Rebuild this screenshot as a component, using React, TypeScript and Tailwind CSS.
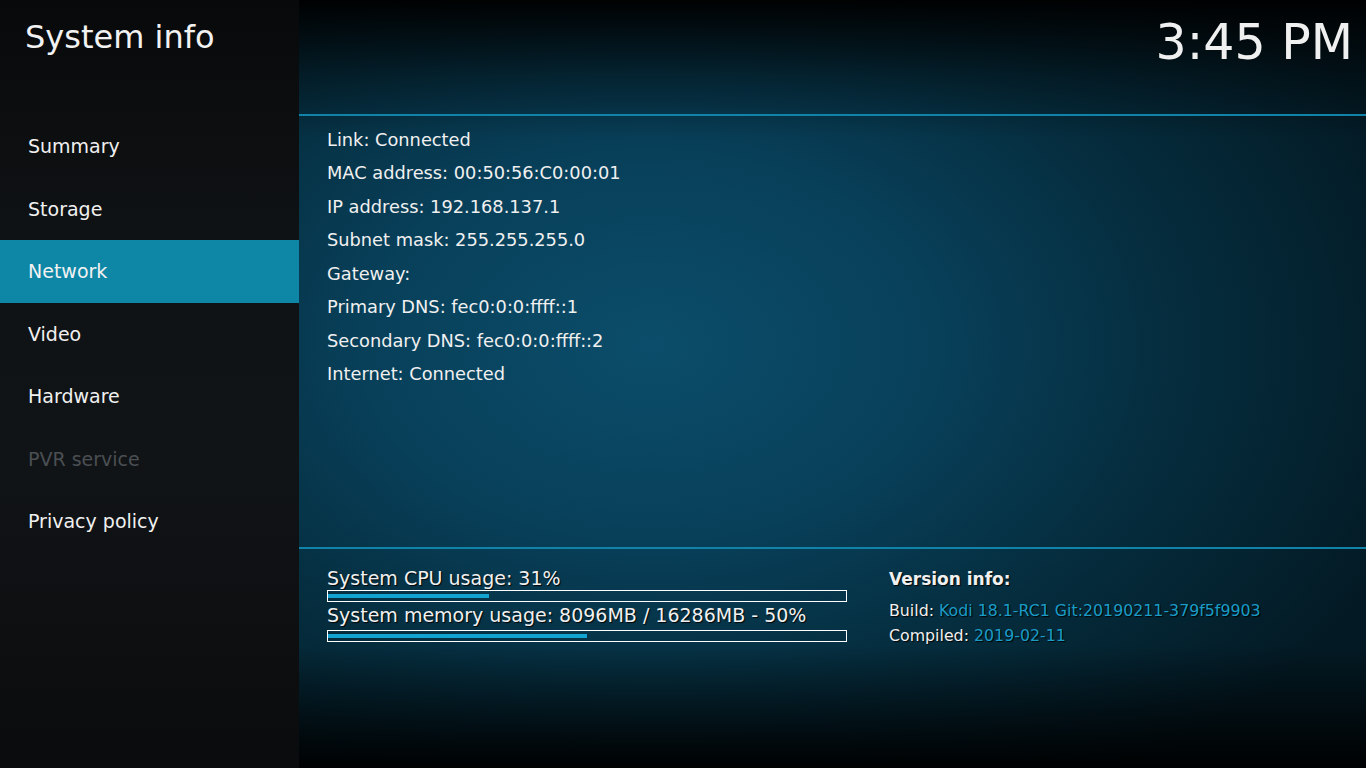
const menu = [
  { label: "Summary" },
  { label: "Storage" },
  { label: "Network", active: true },
  { label: "Video" },
  { label: "Hardware" },
  { label: "PVR service", disabled: true },
  { label: "Privacy policy" },
];

const network = [
  "Link: Connected",
  "MAC address: 00:50:56:C0:00:01",
  "IP address: 192.168.137.1",
  "Subnet mask: 255.255.255.0",
  "Gateway:",
  "Primary DNS: fec0:0:0:ffff::1",
  "Secondary DNS: fec0:0:0:ffff::2",
  "Internet: Connected",
];

const UsageBar = ({ label, percent, gap }: { label: string; percent: number; gap: string }) => (
  <div className="flex flex-col">
    <div className="h-[21px] whitespace-nowrap text-[19px] leading-[21px] text-[#f0f0f0] [text-shadow:1px_1px_1px_rgba(0,0,0,0.9)]">
      {label}
    </div>
    <div className={`${gap} flex h-[12px] items-center border border-white`}>
      <div className="h-[4px] bg-[#12a3d0]" style={{ width: `${percent}%` }} />
    </div>
  </div>
);

export default function App() {
  return (
    <div className="flex h-[768px] w-[1366px] overflow-hidden font-['DejaVu_Sans',sans-serif] text-[#f0f0f0]">
      {/* Sidebar */}
      <aside className="flex w-[299px] shrink-0 flex-col bg-[#101315] bg-[linear-gradient(180deg,#08090a_0%,#0f1214_30%,#111417_60%,#0a0b0c_100%)]">
        <div className="h-[115px] pl-[25px] pt-[21px] text-[32px] leading-none text-[#f2f2f2]">System info</div>
        <nav className="flex flex-col">
          {menu.map((item) => (
            <div
              key={item.label}
              className={`flex h-[62.5px] items-center pl-[28px] text-[19px] leading-[62.5px] ${
                item.active ? "bg-[#0e87a7] text-[#f2f2f2]" : item.disabled ? "text-[#4a4f53]" : "text-[#f0f0f0]"
              }`}
            >
              {item.label}
            </div>
          ))}
        </nav>
      </aside>

      {/* Main content */}
      <main className="flex flex-1 flex-col bg-[#03161e] bg-[linear-gradient(180deg,rgba(0,0,0,0.97)_0%,rgba(0,0,0,0.35)_10%,rgba(0,0,0,0)_18%,rgba(0,0,0,0)_84%,rgba(0,0,0,0.96)_100%),radial-gradient(ellipse_75%_70%_at_33%_45%,#0b4d6a_0%,#08405a_35%,#052d3e_65%,#031a24_100%)]">
        <header className="flex h-[114px] justify-end pr-[13px] pt-[18px]">
          <span className="text-[49px] leading-none text-[#f0f0f0]">3:45 PM</span>
        </header>
        <div className="h-[2px] bg-[#1283a8]" />

        <section className="flex h-[431px] flex-col pl-[28px] pt-[7px]">
          {network.map((row) => (
            <div key={row} className="h-[33.43px] whitespace-nowrap text-[17.8px] leading-[33.43px]">
              {row}
            </div>
          ))}
        </section>
        <div className="h-[2px] bg-[#1283a8]" />

        <section className="flex pl-[28px] pt-[19px]">
          <div className="flex w-[520px] flex-col gap-[3px]">
            <UsageBar gap="mt-[1px]" label="System CPU usage: 31%" percent={31} />
            <UsageBar gap="mt-[4px]" label="System memory usage: 8096MB / 16286MB - 50%" percent={50} />
          </div>
          <div className="ml-[42px] flex flex-col [text-shadow:1px_1px_1px_rgba(0,0,0,0.9)]">
            <div className="h-[20px] pt-[1px] text-[17px] font-bold leading-[20px] text-[#f0f0f0]">Version info:</div>
            <div className="mt-[10px] whitespace-nowrap text-[15.8px] leading-[25px]">
              <span className="text-[#f0f0f0]">Build: </span>
              <span className="text-[#1a9cc6]">Kodi 18.1-RC1 Git:20190211-379f5f9903</span>
            </div>
            <div className="whitespace-nowrap text-[15.8px] leading-[25px]">
              <span className="text-[#f0f0f0]">Compiled: </span>
              <span className="text-[#1a9cc6]">2019-02-11</span>
            </div>
          </div>
        </section>
      </main>
    </div>
  );
}
